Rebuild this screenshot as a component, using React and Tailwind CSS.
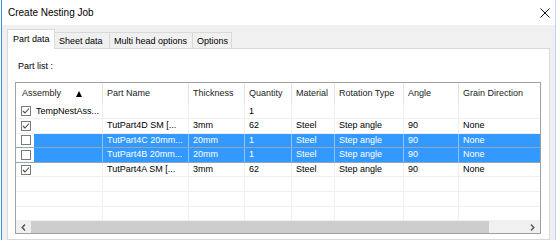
import React from 'react';

const cols = [
  { w: 'w-[87px]', label: 'Assembly' },
  { w: 'w-[86px]', label: 'Part Name' },
  { w: 'w-[56px]', label: 'Thickness' },
  { w: 'w-[47px]', label: 'Quantity' },
  { w: 'w-[43px]', label: 'Material' },
  { w: 'w-[69px]', label: 'Rotation Type' },
  { w: 'w-[55px]', label: 'Angle' },
  { w: 'flex-1', label: 'Grain Direction' },
];

const rows = [
  { checked: true, cells: ['TempNestAss...', '', '', '1', '', '', '', ''] },
  { checked: true, cells: ['', 'TutPart4D SM [...', '3mm', '62', 'Steel', 'Step angle', '90', 'None'] },
  { selected: true, cells: ['', 'TutPart4C 20mm...', '20mm', '1', 'Steel', 'Step angle', '90', 'None'] },
  { selected: true, cells: ['', 'TutPart4B 20mm...', '20mm', '1', 'Steel', 'Step angle', '90', 'None'] },
  { checked: true, cells: ['', 'TutPart4A SM [...', '3mm', '62', 'Steel', 'Step angle', '90', 'None'] },
  { empty: true, cells: ['', '', '', '', '', '', '', ''] },
  { empty: true, cells: ['', '', '', '', '', '', '', ''] },
  { empty: true, cells: ['', '', '', '', '', '', '', ''] },
];

function CheckBox({ checked }) {
  return (
    <div className="w-[10px] h-[10px] border border-[#7a7a7a] bg-white flex items-center justify-center">
      {checked && (
        <svg width="8" height="8" viewBox="0 0 8 8">
          <polyline points="1,4 3,6 7,1.5" fill="none" stroke="#4a4a4a" strokeWidth="1.1" />
        </svg>
      )}
    </div>
  );
}

function Chevron({ dir }) {
  return (
    <svg width="5" height="7" viewBox="0 0 5 7">
      <path d={dir === 'left' ? 'M4 0.5 L1.2 3.5 L4 6.5' : 'M1 0.5 L3.8 3.5 L1 6.5'} fill="none" stroke="#5a5a5a" strokeWidth="1.5" />
    </svg>
  );
}

function Row({ row }) {
  const sel = row.selected;
  return (
    <div className={`flex h-[14.6px] border-b ${sel ? 'border-[#8fa7bd]' : 'border-[#f0f0f0]'}`}>
      {cols.map((c, i) => {
        const sep = i < cols.length - 1 ? (sel ? 'border-r border-[#8cc4fb]' : 'border-r border-[#f0f0f0]') : '';
        if (i === 0) {
          return (
            <div key={i} className={`${c.w} flex ${sep}`}>
              <div className="w-[18px] flex items-center pl-[5px] bg-white">
                {!row.empty && <CheckBox checked={row.checked} />}
              </div>
              <div className={`flex-1 flex items-center pl-[2px] whitespace-nowrap ${sel ? 'bg-[#3399ff] text-white' : ''}`}>
                {row.cells[0]}
              </div>
            </div>
          );
        }
        return (
          <div key={i} className={`${c.w} flex items-center pl-[4px] whitespace-nowrap overflow-hidden ${sep} ${sel ? 'bg-[#3399ff] text-white' : ''}`}>
            {row.cells[i]}
          </div>
        );
      })}
    </div>
  );
}

export default function App() {
  return (
    <div className="w-[557px] h-[240px] overflow-hidden bg-white px-px font-['Liberation_Sans',Arial,sans-serif] text-[9px] text-black">
      <div className="h-full flex flex-col border-l border-l-[#3b8ee0] border-r border-r-[#b9d7f3]">
        <div className="h-[25px] flex items-center justify-between pl-[6px] pr-[5px] bg-white">
          <span className="text-[10px] text-black">Create Nesting Job</span>
          <svg width="10" height="10" viewBox="0 0 10 10">
            <path d="M0.5 0.5 L9.5 9.5 M9.5 0.5 L0.5 9.5" stroke="#111" strokeWidth="1" />
          </svg>
        </div>
        <div className="flex-1 flex flex-col bg-[#f0f0f0] pl-[5px] pr-[5px] pt-[4px]">
          <div className="flex items-end h-[19px]">
            <div className="w-[48px] h-[20px] -mb-px relative z-10 bg-white border border-b-0 border-[#d9d9d9] flex items-center pl-[5px]">
              Part data
            </div>
            <div className="w-[55px] h-[16px] border border-b-0 border-l-0 border-[#d9d9d9] flex items-center pl-[4px] pt-[2px]">
              Sheet data
            </div>
            <div className="w-[83px] h-[16px] border border-b-0 border-l-0 border-[#d9d9d9] flex items-center pl-[4px] pt-[2px]">
              Multi head options
            </div>
            <div className="w-[39px] h-[16px] border border-b-0 border-l-0 border-[#d9d9d9] flex items-center pl-[4px] pt-[2px]">
              Options
            </div>
          </div>
          <div className="flex-1 bg-white border border-[#d9d9d9]">
            <div className="pl-[10px] pt-[12px] leading-[11px]">Part list :</div>
            <div className="ml-[7px] mt-[10px] w-[526px] h-[152px] border border-[#a0a0a0] flex flex-col">
              <div className="flex h-[21.5px] shrink-0">
                {cols.map((c, i) => (
                  <div
                    key={i}
                    className={`${c.w} flex items-center whitespace-nowrap text-[#1a1a1a] ${i === 0 ? 'pl-[6px]' : 'pl-[4px]'} ${i < cols.length - 1 ? 'border-r border-[#e5e5e5]' : ''}`}
                  >
                    {c.label}
                    {i === 0 && (
                      <svg className="ml-[15px]" width="6" height="6" viewBox="0 0 6 6">
                        <polygon points="3,0 6,6 0,6" fill="#000" />
                      </svg>
                    )}
                  </div>
                ))}
              </div>
              {rows.map((r, i) => (
                <Row key={i} row={r} />
              ))}
              <div className="flex flex-1 bg-[#f0f0f0]">
                <div className="w-[15px] flex items-center justify-center">
                  <Chevron dir="left" />
                </div>
                <div className="w-[458px] bg-[#cdcdcd]" />
                <div className="flex-1" />
                <div className="w-[16px] flex items-center justify-center">
                  <Chevron dir="right" />
                </div>
              </div>
            </div>
          </div>
        </div>
      </div>
    </div>
  );
}
